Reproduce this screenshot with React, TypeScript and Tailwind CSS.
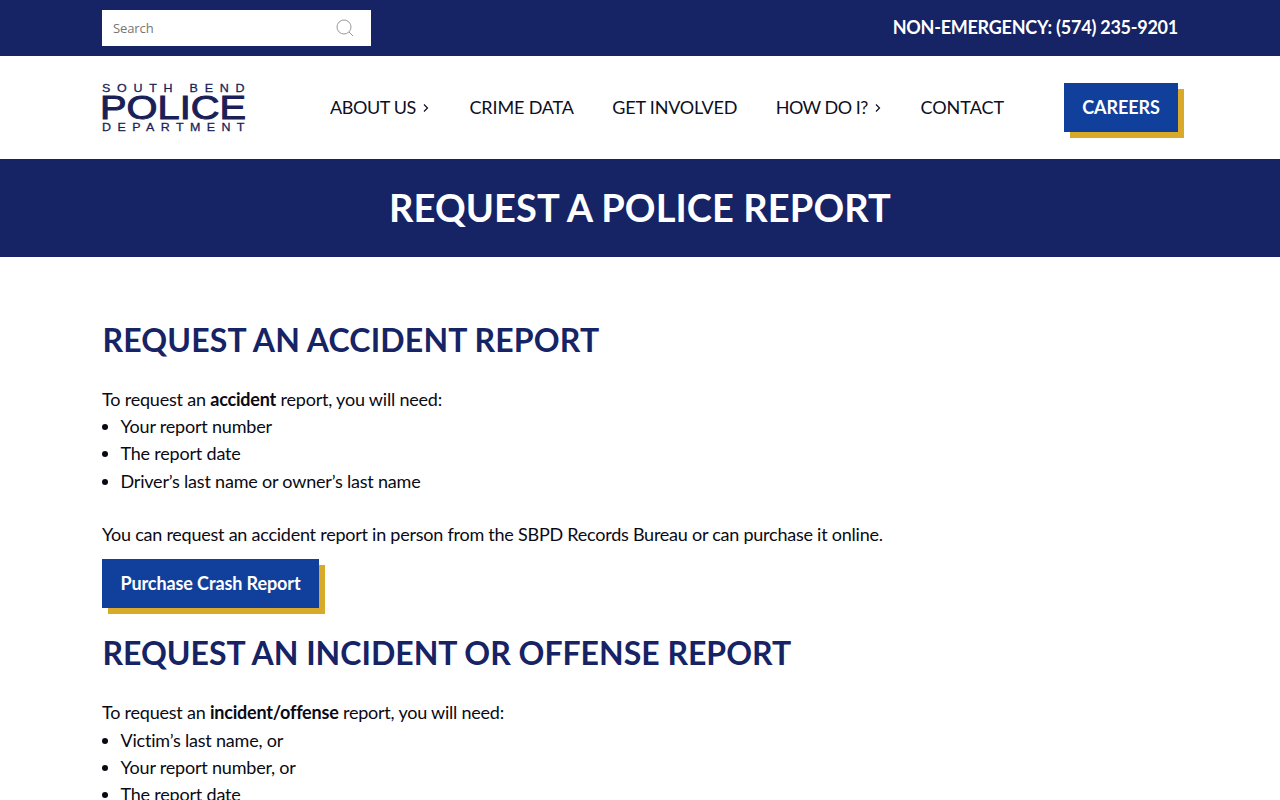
import React from "react";

function Chevron() {
  return (
    <svg width="6" height="10" viewBox="0 0 6 10" fill="none" stroke="currentColor" strokeWidth="1.2" className="ml-[7px] mt-[2px]">
      <path d="M1 1.5l3.5 3.5-3.5 3.5" />
    </svg>
  );
}

function Logo() {
  return (
    <svg width="146" height="50" viewBox="0 0 146 50" className="block overflow-visible" fill="#1b1f58" aria-label="South Bend Police Department">
      <g transform="scale(1.25 1)">
        <text x="0" y="8.5" fontFamily="'Liberation Sans', sans-serif" fontSize="10" textLength="114" lengthAdjust="spacing" stroke="#1b1f58" strokeWidth="0.25">SOUTH BEND</text>
        <text x="0" y="48" fontFamily="'Liberation Sans', sans-serif" fontSize="10" textLength="114" lengthAdjust="spacing" stroke="#1b1f58" strokeWidth="0.25">DEPARTMENT</text>
      </g>
      <text x="-2" y="36" fontFamily="'Liberation Sans', sans-serif" fontSize="33.5" textLength="146" lengthAdjust="spacingAndGlyphs" stroke="#1b1f58" strokeWidth="1">POLICE</text>
    </svg>
  );
}

function NavItem({ children, chevron, className }: { children: React.ReactNode; chevron?: boolean; className?: string }) {
  return (
    <a className={`flex items-center text-[18px] leading-none text-[#0c0f24] ${className ?? ""}`}>
      {children}
      {chevron && <Chevron />}
    </a>
  );
}

function Bullet({ children }: { children: React.ReactNode }) {
  return <li className="h-[27.3px]">{children}</li>;
}

export default function App() {
  return (
    <div className="h-[800px] overflow-hidden bg-white font-['Lato','Noto_Sans',sans-serif] text-[18px] text-[#0a0a14]">
      <div className="h-14 bg-[#162365]">
        <div className="mx-auto flex h-full w-[1076px] items-center justify-between">
          <div className="flex h-9 w-[269px] items-center justify-between bg-white pl-[11px] pr-[17px]">
            <span className="pt-px font-['Open_Sans',sans-serif] text-[13px] tracking-[-0.1px] text-[#757575]">Search</span>
            <svg width="18" height="18" viewBox="0 0 18 18" fill="none" stroke="#8d8d8d" strokeWidth="0.9">
              <circle cx="8" cy="8" r="7" />
              <path d="M13 13l4 4" />
            </svg>
          </div>
          <div className="pb-[2px] text-[18px] font-bold tracking-[-0.25px] text-white">NON-EMERGENCY: (574) 235-9201</div>
        </div>
      </div>

      <div className="h-[103px]">
        <div className="mx-auto flex h-full w-[1076px] items-center">
          <div className="mt-[1px] w-[228px]"><Logo /></div>
          <nav className="flex items-center gap-[38.5px] pb-[2px]">
            <NavItem chevron className="mr-[2px] tracking-[-0.4px]">ABOUT US</NavItem>
            <NavItem className="tracking-[-0.15px]">CRIME DATA</NavItem>
            <NavItem className="tracking-[-0.2px]">GET INVOLVED</NavItem>
            <NavItem chevron className="tracking-[-0.5px]">HOW DO I?</NavItem>
            <NavItem className="ml-[1px]">CONTACT</NavItem>
          </nav>
          <a className="ml-auto flex h-[49px] w-[114px] items-center justify-center bg-[#113f9c] pb-px text-[18px] font-bold tracking-[-0.1px] text-white shadow-[6px_6px_0_#d9a92a]">CAREERS</a>
        </div>
      </div>

      <div className="flex h-[98px] items-center justify-center bg-[#162365] pb-[2px]">
        <h1 className="text-[38px] font-bold tracking-[0.09px] text-white">REQUEST A POLICE REPORT</h1>
      </div>

      <div className="mx-auto w-[1076px] pt-[62px]">
        <h2 className="pl-[0.5px] text-[32px] leading-[41px] font-bold tracking-[0.16px] text-[#162365]">REQUEST AN ACCIDENT REPORT</h2>
        <p className="mt-[26px] leading-[27px] tracking-[-0.2px]">To request an <b>accident</b> report, you will need:</p>
        <ul className="list-disc pl-[18.5px] tracking-[-0.2px] leading-[27px]">
          <Bullet>Your report number</Bullet>
          <Bullet>The report date</Bullet>
          <Bullet>Driver’s last name or owner’s last name</Bullet>
        </ul>
        <p className="mt-[26px] leading-[27px] tracking-[-0.24px]">You can request an accident report in person from the SBPD Records Bureau or can purchase it online.</p>
        <a className="mt-[11px] flex h-[49px] w-[217px] items-center justify-center bg-[#113f9c] text-[18px] font-bold tracking-[-0.1px] text-white shadow-[6px_6px_0_#d9a92a]">Purchase Crash Report</a>
        <h2 className="mt-[24px] pl-[0.5px] text-[32px] leading-[41px] font-bold text-[#162365]">REQUEST AN INCIDENT OR OFFENSE REPORT</h2>
        <p className="mt-[26px] leading-[27px] tracking-[-0.22px]">To request an <b>incident/offense</b> report, you will need:</p>
        <ul className="list-disc pl-[18.5px] pt-px tracking-[-0.2px] leading-[27px]">
          <Bullet>Victim’s last name, or</Bullet>
          <Bullet>Your report number, or</Bullet>
          <Bullet>The report date</Bullet>
        </ul>
      </div>
    </div>
  );
}
